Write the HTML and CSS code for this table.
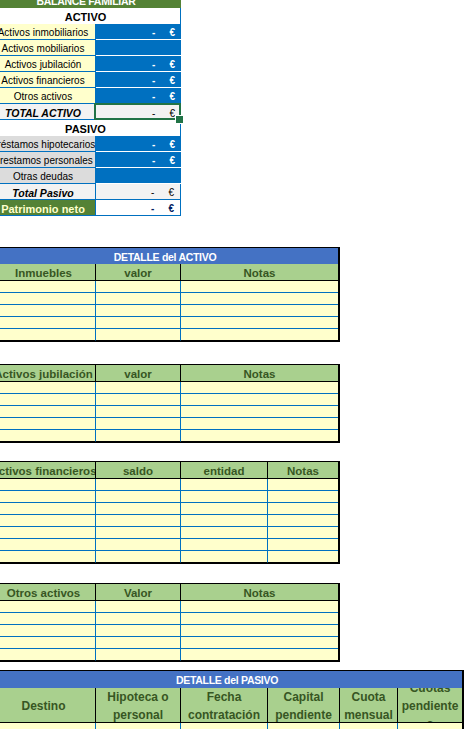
FILE: index.html
```html
<!DOCTYPE html>
<html lang="es">
<head>
<meta charset="utf-8">
<title>Balance familiar</title>
<link rel="stylesheet" href="styles.css">
</head>
<body>
<div class="sheet">
  <section class="balance">
    <div class="cell title">BALANCE FAMILIAR</div>
    <div class="cell section">ACTIVO</div>
    <div class="cell label yellow"><span>Activos inmobiliarios</span></div>
    <div class="cell val blue"><span>-</span><span>€</span></div>
    <div class="cell label yellow"><span>Activos mobiliarios</span></div>
    <div class="cell val blue"></div>
    <div class="cell label yellow"><span>Activos jubilación</span></div>
    <div class="cell val blue"><span>-</span><span>€</span></div>
    <div class="cell label yellow"><span>Activos financieros</span></div>
    <div class="cell val blue"><span>-</span><span>€</span></div>
    <div class="cell label yellow"><span>Otros activos</span></div>
    <div class="cell val blue"><span>-</span><span>€</span></div>
    <div class="cell label total"><span>TOTAL ACTIVO</span></div>
    <div class="cell val total-val selected"><span>-</span><span>€</span></div>
    <div class="cell section">PASIVO</div>
    <div class="cell label gray"><span>Préstamos hipotecarios</span></div>
    <div class="cell val blue"><span>-</span><span>€</span></div>
    <div class="cell label gray"><span>Prestamos personales</span></div>
    <div class="cell val blue"><span>-</span><span>€</span></div>
    <div class="cell label gray"><span>Otras deudas</span></div>
    <div class="cell val blue"></div>
    <div class="cell label total"><span>Total Pasivo</span></div>
    <div class="cell val total-val boxed"><span>-</span><span>€</span></div>
    <div class="cell label equity"><span>Patrimonio neto</span></div>
    <div class="cell val equity-val boxed"><span>-</span><span>€</span></div>
  </section>

  <section class="tbl c3 t-activo">
    <div class="th-blue">DETALLE del ACTIVO</div>
    <div class="th"><span>Inmuebles</span></div><div class="th"><span>valor</span></div><div class="th last"><span>Notas</span></div>
    <div class="td"></div><div class="td"></div><div class="td last"></div>
    <div class="td"></div><div class="td"></div><div class="td last"></div>
    <div class="td"></div><div class="td"></div><div class="td last"></div>
    <div class="td"></div><div class="td"></div><div class="td last"></div>
    <div class="td end"></div><div class="td end"></div><div class="td last end"></div>
  </section>

  <section class="tbl c3 t-jub">
    <div class="th"><span>Activos jubilación</span></div><div class="th"><span>valor</span></div><div class="th last"><span>Notas</span></div>
    <div class="td"></div><div class="td"></div><div class="td last"></div>
    <div class="td"></div><div class="td"></div><div class="td last"></div>
    <div class="td"></div><div class="td"></div><div class="td last"></div>
    <div class="td"></div><div class="td"></div><div class="td last"></div>
    <div class="td end"></div><div class="td end"></div><div class="td last end"></div>
  </section>

  <section class="tbl c4 t-fin">
    <div class="th"><span>Activos financieros</span></div><div class="th"><span>saldo</span></div><div class="th"><span>entidad</span></div><div class="th last"><span>Notas</span></div>
    <div class="td"></div><div class="td"></div><div class="td"></div><div class="td last"></div>
    <div class="td"></div><div class="td"></div><div class="td"></div><div class="td last"></div>
    <div class="td"></div><div class="td"></div><div class="td"></div><div class="td last"></div>
    <div class="td"></div><div class="td"></div><div class="td"></div><div class="td last"></div>
    <div class="td"></div><div class="td"></div><div class="td"></div><div class="td last"></div>
    <div class="td"></div><div class="td"></div><div class="td"></div><div class="td last"></div>
    <div class="td end"></div><div class="td end"></div><div class="td end"></div><div class="td last end"></div>
  </section>

  <section class="tbl c3 t-otros">
    <div class="th"><span>Otros activos</span></div><div class="th"><span>Valor</span></div><div class="th last"><span>Notas</span></div>
    <div class="td"></div><div class="td"></div><div class="td last"></div>
    <div class="td"></div><div class="td"></div><div class="td last"></div>
    <div class="td"></div><div class="td"></div><div class="td last"></div>
    <div class="td"></div><div class="td"></div><div class="td last"></div>
    <div class="td end"></div><div class="td end"></div><div class="td last end"></div>
  </section>

  <section class="tbl c6 t-pasivo">
    <div class="th-blue tall">DETALLE del PASIVO</div>
    <div class="th wrap"><div class="tx">Destino</div></div>
    <div class="th wrap"><div class="tx">Hipoteca o personal</div></div>
    <div class="th wrap"><div class="tx">Fecha contratación</div></div>
    <div class="th wrap"><div class="tx">Capital pendiente</div></div>
    <div class="th wrap"><div class="tx">Cuota mensual</div></div>
    <div class="th wrap last"><div class="tx">Cuotas pendientes</div></div>
    <div class="td"></div><div class="td"></div><div class="td"></div><div class="td"></div><div class="td"></div><div class="td last"></div>
    <div class="td"></div><div class="td"></div><div class="td"></div><div class="td"></div><div class="td"></div><div class="td last"></div>
  </section>
</div>
</body>
</html>
```

FILE: styles.css
```css
* { box-sizing: border-box; }

html, body {
  margin: 0;
  padding: 0;
  background: #ffffff;
}

body {
  width: 470px;
  height: 729px;
  overflow: hidden;
  font-family: "Liberation Sans", Arial, sans-serif;
  color: #000;
}

.sheet {
  margin: -8px 0 0 -9px;
  width: 473px;
  display: flex;
  flex-direction: column;
  align-items: flex-start;
}

/* ---------- Balance summary ---------- */
.balance {
  display: grid;
  grid-template-columns: 105px 85px;
  grid-auto-rows: 16px;
  font-size: 10px;
}

.cell {
  display: flex;
  align-items: center;
  justify-content: center;
  overflow: hidden;
  white-space: nowrap;
}

.cell > span { flex: none; }

.title {
  grid-column: 1 / -1;
  background: #548235;
  color: #fff;
  font-weight: bold;
  font-size: 10.5px;
  letter-spacing: -0.3px;
  align-items: flex-end;
  padding-bottom: 1px;
}

.section {
  grid-column: 1 / -1;
  background: #fff;
  border-right: 1px solid #0070c0;
  font-weight: bold;
  font-size: 11px;
  padding-top: 2px;
}

.label {
  border-right: 1px solid #0070c0;
  border-bottom: 1px solid #0070c0;
  padding-top: 2px;
}

.yellow { background: #ffffcc; }
.gray { background: #dcdcdc; }

.total {
  background: #f2f2f2;
  font-weight: bold;
  font-style: italic;
  font-size: 10.5px;
}

.equity {
  background: #548235;
  color: #ffffcc;
  font-weight: bold;
  font-size: 11px;
}

.val {
  justify-content: flex-end;
  gap: 14px;
  padding-right: 6px;
  padding-top: 2px;
}

.val.blue {
  background: #0070c0;
  color: #fff;
  font-weight: bold;
  border-bottom: 1px solid #fff;
}

.total-val { background: #f2f2f2; }

.boxed {
  border-right: 1px solid #0070c0;
  border-bottom: 1px solid #0070c0;
}

.equity-val {
  background: #fff;
  color: #002060;
  font-weight: bold;
}

.selected {
  position: relative;
  overflow: visible;
}

.selected::before {
  content: "";
  position: absolute;
  top: -1px;
  left: -2px;
  right: 0;
  bottom: 0;
  border: 2px solid #217346;
}

.selected::after {
  content: "";
  position: absolute;
  right: -3px;
  bottom: -4px;
  width: 7px;
  height: 7px;
  background: #217346;
  border: 1px solid #fff;
  z-index: 2;
}

/* ---------- Detail tables ---------- */
.tbl {
  display: grid;
  border: 1px solid #000;
  border-right-width: 2px;
}

.c3 { grid-template-columns: 104px 85px 157px; }
.c4 { grid-template-columns: 104px 85px 87px 70px; }
.c6 { grid-template-columns: 104px 85px 87px 72px 58px 64px; }

.t-activo { margin-top: 31px; }
.t-jub { margin-top: 22px; }
.t-fin { margin-top: 18px; }
.t-otros { margin-top: 19px; }
.t-pasivo { margin-top: 8px; }

.th-blue {
  grid-column: 1 / -1;
  height: 16px;
  background: #4472c4;
  color: #fff;
  font-weight: bold;
  font-size: 10.5px;
  letter-spacing: -0.3px;
  display: flex;
  align-items: center;
  justify-content: center;
  padding-top: 1px;
}

.th-blue.tall { height: 17px; }

.th {
  height: 17px;
  background: #a9d08e;
  color: #375623;
  font-weight: bold;
  font-size: 11.5px;
  border-right: 1px solid #000;
  border-bottom: 1px solid #000;
  display: flex;
  align-items: center;
  justify-content: center;
  overflow: hidden;
  white-space: nowrap;
  padding-top: 1px;
}

.th > span { flex: none; }

.th.last, .td.last { border-right: none; }

.th.wrap {
  height: 35px;
  font-size: 12px;
  line-height: 18px;
  white-space: normal;
  padding-top: 1px;
}

.th.wrap .tx {
  flex: none;
  width: 100%;
  padding: 0 3px;
  text-align: center;
  overflow-wrap: anywhere;
}

.td {
  height: 12px;
  background: #ffffcc;
  border-right: 1px solid #0070c0;
  border-bottom: 1px solid #0070c0;
}

.td.end { border-bottom-color: #000; }
```
